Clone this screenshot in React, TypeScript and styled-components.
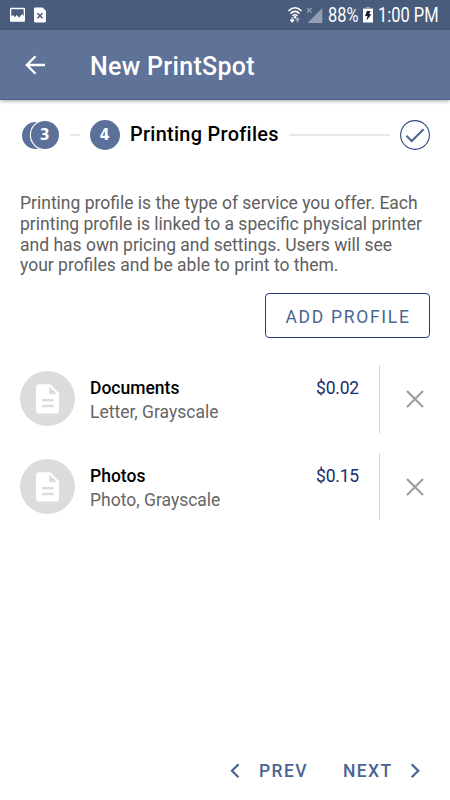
import React from "react";
import styled, { createGlobalStyle } from "styled-components";

const Global = createGlobalStyle`
  * { box-sizing: border-box; }
  body { margin: 0; background: #fff; font-family: Roboto, "Noto Sans", sans-serif; }
  svg { display: block; flex: none; }
`;

const Screen = styled.div`
  width: 450px;
  height: 800px;
  display: flex;
  flex-direction: column;
  overflow: hidden;
  background: #fff;
`;

const StatusBar = styled.header`
  height: 30px;
  flex: none;
  display: flex;
  align-items: center;
  padding-left: 9px;
  background: #495c7c;
  color: #fff;
`;

const Notifications = styled.div`
  display: flex;
  align-items: center;
  gap: 8px;
  width: 279px;
`;

const StatusText = styled.span<{ $width: number; $scale: number }>`
  width: ${(p) => p.$width}px;
  font-size: 19.5px;
  line-height: 30px;
  white-space: nowrap;
  transform: scaleX(${(p) => p.$scale});
  transform-origin: left center;
  padding-top: 2px;
`;

const Toolbar = styled.div`
  height: 70px;
  flex: none;
  display: flex;
  align-items: center;
  gap: 44px;
  padding: 0 0 0 25px;
  background: #5f7298;
  border-bottom: 1px solid #4c6087;
  box-shadow: 0 1px 4px rgba(0, 0, 0, 0.35);
`;

const Title = styled.h1`
  margin: 0;
  padding-top: 4px;
  color: #fff;
  font-size: 25px;
  line-height: 30px;
  font-weight: 500;
  letter-spacing: 0.3px;
`;

const Stepper = styled.div`
  height: 30px;
  margin-top: 20px;
  padding: 0 20px 0 22px;
  flex: none;
  display: flex;
  align-items: center;
`;

const Stack = styled.div`
  display: flex;
  align-items: center;
  width: 38px;
`;

const StackBack = styled.span`
  width: 27px;
  height: 27px;
  border-radius: 50%;
  background: #5b7199;
`;

const StepCircle = styled.span<{ $small?: boolean }>`
  flex: none;
  display: flex;
  align-items: center;
  justify-content: center;
  width: ${(p) => (p.$small ? 28 : 30)}px;
  height: ${(p) => (p.$small ? 28 : 30)}px;
  margin-left: ${(p) => (p.$small ? -18 : 0)}px;
  border-radius: 50%;
  box-shadow: 0 0 0 ${(p) => (p.$small ? 1.2 : 0)}px #fff;
  background: #5b7199;
  color: #fff;
  font-family: "DejaVu Sans", sans-serif;
  font-size: 16.5px;
  font-weight: 700;
  line-height: 30px;
`;

const StepNumber = styled.span`
  transform: scaleX(0.86);
`;

const Connector = styled.span<{ $left: number; $width: number; $right: number }>`
  width: ${(p) => p.$width}px;
  height: 2px;
  margin: 0 ${(p) => p.$right}px 0 ${(p) => p.$left}px;
  background: #e6e7e7;
`;

const StepLabel = styled.span`
  width: 149px;
  margin-left: 10px;
  color: #000;
  font-size: 19.9px;
  font-weight: 500;
  line-height: 30px;
  letter-spacing: 0.3px;
  white-space: nowrap;
`;

const Description = styled.p`
  margin: 43px 0 0 20px;
  flex: none;
  color: #606060;
  font-size: 17.5px;
  line-height: 20.75px;
`;

const Line = styled.span`
  display: block;
  white-space: nowrap;
`;

const AddButton = styled.button`
  flex: none;
  align-self: flex-end;
  width: 165px;
  height: 45px;
  margin: 17px 20px 0 0;
  padding: 2px 0 0 1px;
  border: 1px solid #243f7d;
  border-radius: 4px;
  background: #fff;
  color: #4b6593;
  font: 450 17.5px/20px Roboto, sans-serif;
  letter-spacing: 1.7px;
  white-space: nowrap;
`;

const ProfileList = styled.ul`
  list-style: none;
  margin: 27px 0 0;
  padding: 0 20px;
  display: flex;
  flex-direction: column;
  gap: 20px;
`;

const ProfileRow = styled.li`
  height: 67.7px;
  display: flex;
  align-items: center;
`;

const Avatar = styled.div`
  width: 55px;
  height: 55px;
  flex: none;
  display: flex;
  align-items: center;
  justify-content: center;
  border-radius: 50%;
  background: #dcdcdc;
`;

const ProfileText = styled.div`
  width: 226px;
  margin-left: 15px;
  padding-top: 3px;
  font-size: 17.5px;
  line-height: 24px;
`;

const ProfileName = styled.div`
  color: #000;
  font-weight: 500;
`;

const ProfileDetail = styled.div`
  color: #666;
`;

const Price = styled.div`
  width: 63px;
  align-self: flex-start;
  padding-top: 11px;
  color: #172d6d;
  font-size: 17.5px;
  line-height: 24px;
  letter-spacing: -0.2px;
`;

const RemoveCell = styled.div`
  width: 51px;
  height: 100%;
  display: flex;
  align-items: center;
  padding-left: 26px;
  border-left: 1px solid #d4d4d4;
`;

const Footer = styled.nav`
  height: 58px;
  margin-top: auto;
  flex: none;
  display: flex;
  align-items: center;
  padding-left: 230px;
`;

const FooterText = styled.span<{ $left?: number; $width: number }>`
  width: ${(p) => p.$width}px;
  margin-left: ${(p) => p.$left ?? 0}px;
  color: #4b6593;
  font-size: 17.5px;
  font-weight: 500;
  line-height: 24px;
  letter-spacing: 1.4px;
  white-space: nowrap;
`;

const PictureIcon = () => (
  <svg width="17" height="16" viewBox="0 0 17 16">
    <rect x="1" y=".8" width="15" height="14" rx=".8" fill="#fff" />
    <path d="M2.300 2.300h12.400V9l-1.500-2-3 3.500-2.500-2.500-1.700 2.200L4 8l-1.700 1.500z" fill="#495c7c" />
  </svg>
);

const FileErrorIcon = () => (
  <svg width="14" height="16" viewBox="0 0 14 16">
    <path d="M1 .5h7.700L12 4v10a1.500 1.500 0 0 1-1.500 1.500h-9A1.500 1.500 0 0 1 0 14V1.500q0-1 1-1z" fill="#fff" />
    <path d="m3.500 6.300 5 5m0-5-5 5" stroke="#495c7c" strokeWidth="1.5" />
  </svg>
);

const WifiIcon = () => (
  <svg width="19" height="18" viewBox="0 0 19 18">
    <g fill="none" stroke="#fff" strokeWidth="1.600">
      <path d="M.5 5Q7-1.500 13.500 5M2.600 7.600Q7 3.200 11.400 7.600M4.700 10Q7 7.600 9.300 10" />
    </g>
    <circle cx="7" cy="11.300" r="1.200" fill="#fff" />
    <path d="M4.200 11.500v4M2.400 13.800l1.800 2 1.800-2" fill="none" stroke="#fff" strokeWidth="1.300" />
    <path d="M9.500 16.500v-4M7.800 14l1.700-2 1.700 2" fill="none" stroke="#a4afc0" strokeWidth="1.300" />
  </svg>
);

const SignalIcon = () => (
  <svg width="21" height="17" viewBox="0 0 21 17">
    <path d="M15.300 1v15H.5z" fill="#929eb1" />
    <path d="m0 1 4.600 4.600M4.600 1 0 5.600" stroke="#98a3b5" strokeWidth="1.2" />
  </svg>
);

const BatteryIcon = () => (
  <svg width="15" height="16" viewBox="0 0 15 16">
    <path d="M3 0h4v1h3v2H0V1h3z" fill="#9aa5b5" />
    <path d="M0 2h10v13.500H0z" fill="#fff" />
    <path d="M4 4h3.500L6 7.300h2.500L3.500 13.500l1-4.500H2z" fill="#111d2d" />
  </svg>
);

const BackIcon = () => (
  <svg width="21" height="20" viewBox="0 0 21 20">
    <path d="M20 10H2m8.500-8.800L1.800 10l8.700 8.800" fill="none" stroke="#fff" strokeWidth="2.300" />
  </svg>
);

const CheckIcon = () => (
  <svg width="30" height="30" viewBox="0 0 30 30">
    <circle cx="15" cy="15" r="14.400" fill="none" stroke="#314d82" strokeWidth="1.1" />
    <path d="m6.400 15.800 5.300 5.200L23.600 9.300" fill="none" stroke="#4b6593" strokeWidth="2" />
  </svg>
);

const DocumentIcon = () => (
  <svg width="23" height="30" viewBox="0 0 23 30">
    <path d="M3 .3h11.300L23 9v17.600a3 3 0 0 1-3 3H3a3 3 0 0 1-3-3V3.300a3 3 0 0 1 3-3z" fill="#fff" />
    <path d="M13.200 2.300v8h8zM6 15h11.500v2.500H6zm0 5.800h11.500v2.500H6z" fill="#dcdcdc" />
  </svg>
);

const CloseIcon = () => (
  <svg width="18" height="18" viewBox="0 0 18 18">
    <path d="m1 1 16 16m0-16L1 17" stroke="#9d9d9d" strokeWidth="2.100" />
  </svg>
);

const Chevron = ({ right = false }: { right?: boolean }) => (
  <svg width="10" height="17" viewBox="0 0 10 17">
    <path d={right ? "m1.700 1.200 6.500 6.500-6.500 6.500" : "M8.500 1.200 2 7.700l6.500 6.500"} fill="none" stroke="#4b6593" strokeWidth="2.300" />
  </svg>
);

const profiles = [
  { name: "Documents", detail: "Letter, Grayscale", price: "$0.02" },
  { name: "Photos", detail: "Photo, Grayscale", price: "$0.15" },
];

export default function App() {
  return (
    <>
      <Global />
      <Screen>
        <StatusBar>
          <Notifications>
            <PictureIcon />
            <FileErrorIcon />
          </Notifications>
          <WifiIcon />
          <SignalIcon />
          <StatusText $width={35} $scale={0.84}>88%</StatusText>
          <BatteryIcon />
          <StatusText $width={61} $scale={0.845}>1:00 PM</StatusText>
        </StatusBar>
        <Toolbar>
          <BackIcon />
          <Title>New PrintSpot</Title>
        </Toolbar>
        <Stepper>
          <Stack>
            <StackBack />
            <StepCircle $small>
              <StepNumber>3</StepNumber>
            </StepCircle>
          </Stack>
          <Connector $left={10} $width={10} $right={10} />
          <StepCircle>
            <StepNumber>4</StepNumber>
          </StepCircle>
          <StepLabel>Printing Profiles</StepLabel>
          <Connector $left={10} $width={101} $right={10} />
          <CheckIcon />
        </Stepper>
        <Description>
          <Line>Printing profile is the type of service you offer. Each</Line>
          <Line>printing profile is linked to a specific physical printer</Line>
          <Line>and has own pricing and settings. Users will see</Line>
          <Line>your profiles and be able to print to them.</Line>
        </Description>
        <AddButton>ADD PROFILE</AddButton>
        <ProfileList>
          {profiles.map((p) => (
            <ProfileRow key={p.name}>
              <Avatar>
                <DocumentIcon />
              </Avatar>
              <ProfileText>
                <ProfileName>{p.name}</ProfileName>
                <ProfileDetail>{p.detail}</ProfileDetail>
              </ProfileText>
              <Price>{p.price}</Price>
              <RemoveCell>
                <CloseIcon />
              </RemoveCell>
            </ProfileRow>
          ))}
        </ProfileList>
        <Footer>
          <Chevron />
          <FooterText $left={19} $width={84}>PREV</FooterText>
          <FooterText $width={67}>NEXT</FooterText>
          <Chevron right />
        </Footer>
      </Screen>
    </>
  );
}
